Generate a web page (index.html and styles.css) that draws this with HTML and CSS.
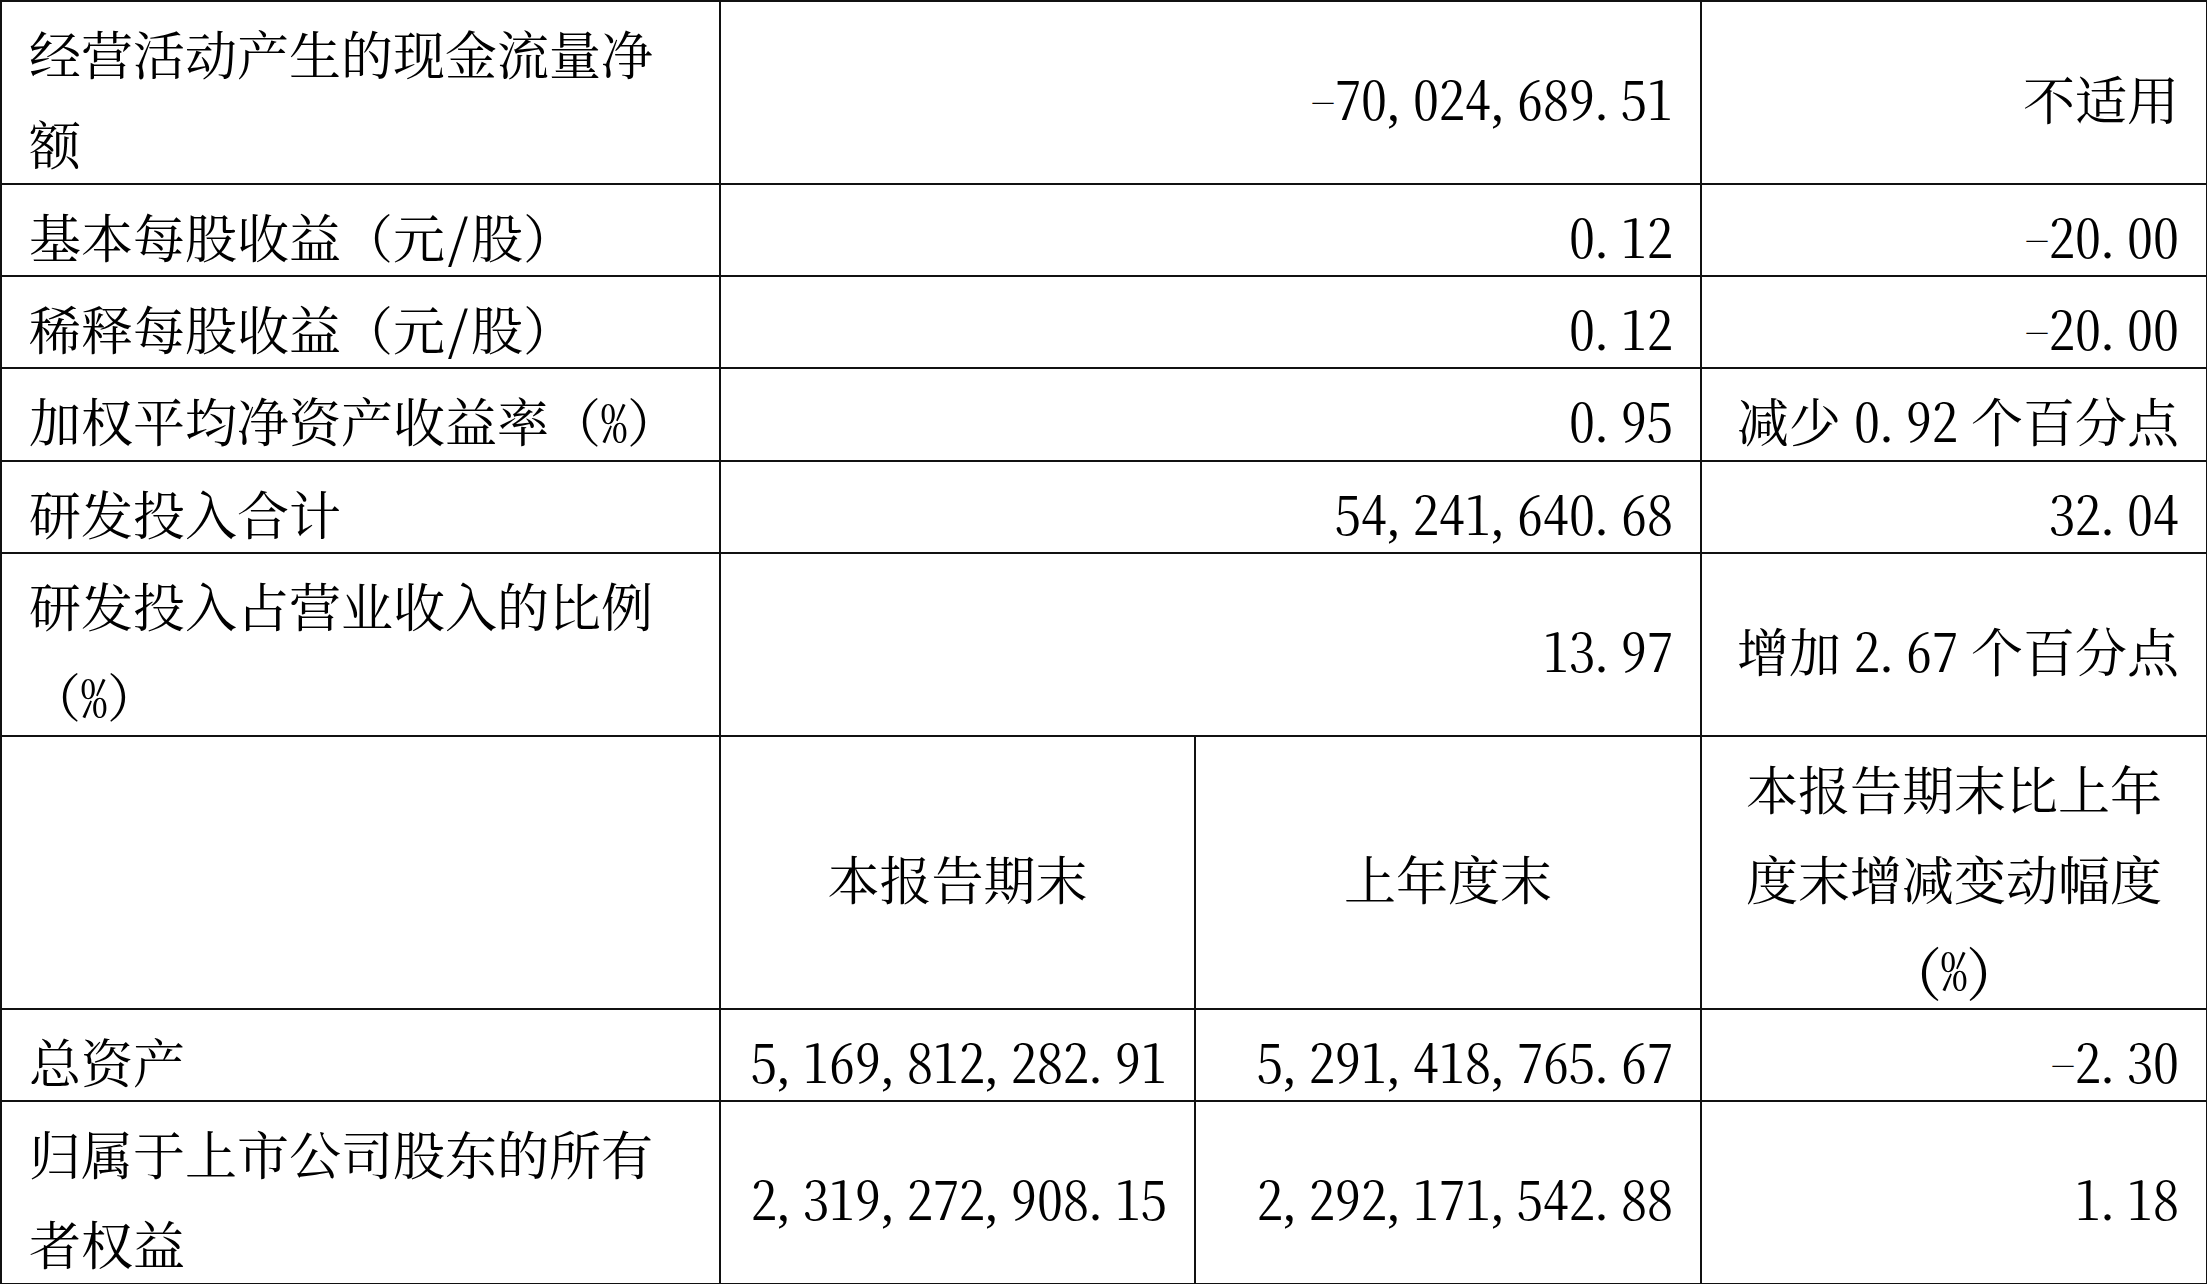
FILE: index.html
```html
<!DOCTYPE html>
<html lang="zh-CN">
<head>
<meta charset="utf-8">
<title>主要会计数据</title>
<link rel="stylesheet" href="styles.css">
</head>
<body>
<table class="fin">
  <colgroup>
    <col class="c1"><col class="c2"><col class="c3"><col class="c4">
  </colgroup>
  <tr>
    <td class="lbl"><div class="t">经营活动产生的现金流量净额</div></td>
    <td class="num" colspan="2"><div class="t"><span class="m">-</span>70<span class="p">,</span>024<span class="p">,</span>689<span class="p">.</span>51</div></td>
    <td class="num"><div class="t">不适用</div></td>
  </tr>
  <tr>
    <td class="lbl"><div class="t">基本每股收益<span class="fw">（</span>元/股<span class="fw">）</span></div></td>
    <td class="num" colspan="2"><div class="t">0<span class="p">.</span>12</div></td>
    <td class="num"><div class="t"><span class="m">-</span>20<span class="p">.</span>00</div></td>
  </tr>
  <tr>
    <td class="lbl"><div class="t">稀释每股收益<span class="fw">（</span>元/股<span class="fw">）</span></div></td>
    <td class="num" colspan="2"><div class="t">0<span class="p">.</span>12</div></td>
    <td class="num"><div class="t"><span class="m">-</span>20<span class="p">.</span>00</div></td>
  </tr>
  <tr>
    <td class="lbl"><div class="t">加权平均净资产收益率<span class="fw">（</span>%<span class="fw">）</span></div></td>
    <td class="num" colspan="2"><div class="t">0<span class="p">.</span>95</div></td>
    <td class="num"><div class="t">减少 0<span class="p">.</span>92 个百分点</div></td>
  </tr>
  <tr>
    <td class="lbl"><div class="t">研发投入合计</div></td>
    <td class="num" colspan="2"><div class="t">54<span class="p">,</span>241<span class="p">,</span>640<span class="p">.</span>68</div></td>
    <td class="num"><div class="t">32<span class="p">.</span>04</div></td>
  </tr>
  <tr>
    <td class="lbl"><div class="t">研发投入占营业收入的比例<span class="nw"><span class="fw">（</span>%<span class="fw">）</span></span></div></td>
    <td class="num" colspan="2"><div class="t">13<span class="p">.</span>97</div></td>
    <td class="num"><div class="t">增加 2<span class="p">.</span>67 个百分点</div></td>
  </tr>
  <tr>
    <td class="lbl"><div class="t"></div></td>
    <td class="ctr"><div class="t">本报告期末</div></td>
    <td class="ctr thin"><div class="t">上年度末</div></td>
    <td class="ctr"><div class="t">本报告期末比上年度末增减变动幅度<span class="nw">(%)</span></div></td>
  </tr>
  <tr>
    <td class="lbl"><div class="t">总资产</div></td>
    <td class="num"><div class="t">5<span class="p">,</span>169<span class="p">,</span>812<span class="p">,</span>282<span class="p">.</span>91</div></td>
    <td class="num thin"><div class="t">5<span class="p">,</span>291<span class="p">,</span>418<span class="p">,</span>765<span class="p">.</span>67</div></td>
    <td class="num"><div class="t"><span class="m">-</span>2<span class="p">.</span>30</div></td>
  </tr>
  <tr>
    <td class="lbl"><div class="t">归属于上市公司股东的所有者权益</div></td>
    <td class="num"><div class="t">2<span class="p">,</span>319<span class="p">,</span>272<span class="p">,</span>908<span class="p">.</span>15</div></td>
    <td class="num thin"><div class="t">2<span class="p">,</span>292<span class="p">,</span>171<span class="p">,</span>542<span class="p">.</span>88</div></td>
    <td class="num"><div class="t">1<span class="p">.</span>18</div></td>
  </tr>
</table>
</body>
</html>
```
FILE: styles.css
```css
html, body {
  margin: 0;
  padding: 0;
  background: #ffffff;
}

/* Song-style CJK face; "hwid" gives half-width Latin digits and punctuation */
body {
  font-family: "Noto Serif CJK SC", "Noto Sans CJK SC", serif;
  font-feature-settings: "hwid" 1;
  font-size: 52px;
  color: #000000;
  text-spacing-trim: space-all;
  word-spacing: -0.25em;
}

.fin {
  border-collapse: collapse;
  table-layout: fixed;
  width: 2206px;
}

.c1 { width: 719px; }
.c2 { width: 475px; }
.c3 { width: 506px; }
.c4 { width: 506px; }

.fin td {
  border: 2px solid #111111;
  padding: 0 27px;
  line-height: 90.35px;
  vertical-align: middle;
}

.fin td.thin {
  border-left-width: 1px;
}

.t {
  margin: 6px 0 -6px;
}

.lbl { text-align: left; }

.num {
  text-align: right;
  white-space: nowrap;
}

.ctr { text-align: center; }

.nw { white-space: nowrap; }

/* keep full-width brackets full-width */
.fw {
  font-feature-settings: "hwid" 0;
}

/* comma / period sit at the left of a half-em cell */
.p {
  font-family: "Liberation Serif", serif;
  font-feature-settings: normal;
  letter-spacing: 0.25em;
  line-height: 0;
}

/* long thin minus bar at digit mid-height */
.m {
  font-feature-settings: "fwid" 1;
  font-size: 28px;
  letter-spacing: -2px;
  vertical-align: 6px;
  line-height: 0;
}
```
